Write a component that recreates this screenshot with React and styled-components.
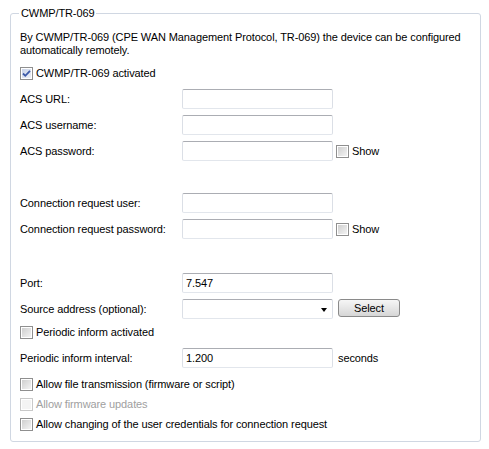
import React from "react";
import styled, { createGlobalStyle } from "styled-components";

const Global = createGlobalStyle`
  html, body { margin: 0; padding: 0; background: #fff; }
  body { font-family: Tahoma, "Liberation Sans", "DejaVu Sans", sans-serif; font-size: 11px; color: #000; letter-spacing: -0.1px; }
`;

const Frame = styled.fieldset`
  margin: 7px 0 0 10px;
  width: 471px;
  box-sizing: border-box;
  border: 1px solid #d0d7e2;
  border-radius: 3px;
  padding: 0 9px 10px 9px;
  min-width: 0;
`;

const Legend = styled.legend`
  padding: 0 2px;
  line-height: 13px;
  font-size: 11px;
  margin-left: -1px;
`;

const Body = styled.div`
  display: flex;
  flex-direction: column;
  padding-top: 11px;
`;

const Desc = styled.p`
  margin: 0;
  line-height: 13px;
`;

const Row = styled.div`
  display: flex;
  align-items: center;
  height: ${(p) => p.$h || 20}px;
  margin-top: ${(p) => p.$mt || 0}px;
`;

const Label = styled.span`
  width: 162px;
  flex: none;
  line-height: 13px;
`;

const TextBox = styled.div`
  position: relative;
  width: 151px;
  height: 20px;
  box-sizing: border-box;
  border: 1px solid #e2e6ec;
  border-top-color: #abadb3;
  border-left-color: #dbdfe6;
  border-right-color: #dbdfe6;
  border-radius: 2px;
  background: #fff;
  display: flex;
  align-items: center;
  padding-left: 3px;
  flex: none;
`;

const Arrow = styled.span`
  position: absolute;
  right: 5px;
  top: 8px;
  width: 0;
  height: 0;
  border-left: 3.5px solid transparent;
  border-right: 3.5px solid transparent;
  border-top: 4px solid #000;
`;

const Box = styled.span`
  width: 13px;
  height: 13px;
  box-sizing: border-box;
  flex: none;
  border: 1px solid ${(p) => (p.$disabled ? "#c9c9c9" : "#8f8f8f")};
  background: #fff;
  padding: 1px;
  display: inline-flex;
  margin-left: ${(p) => p.$ml || 0}px;
  margin-right: 3px;
`;

const BoxInner = styled.span`
  flex: 1;
  background: ${(p) =>
    p.$disabled
      ? "#f4f4f4"
      : p.$checked
      ? "linear-gradient(135deg, #c9d3e8 0%, #eef1f8 100%)"
      : "linear-gradient(135deg, #cfcfcf 0%, #f3f3f3 100%)"};
  display: flex;
  align-items: center;
  justify-content: center;
`;

const CheckText = styled.span`
  color: ${(p) => (p.$disabled ? "#a0a0a0" : "#000")};
  line-height: 13px;
`;

const Button = styled.div`
  margin-left: 5px;
  width: 62px;
  height: 18px;
  box-sizing: border-box;
  border: 1px solid #8a8a8a;
  border-radius: 3px;
  background: linear-gradient(#f6f6f6, #e3e3e3 60%, #d6d6d6);
  display: flex;
  align-items: center;
  justify-content: center;
  align-self: flex-start;
`;

const Suffix = styled.span`
  margin-left: 5px;
`;

function Check({ checked, disabled, ml }) {
  return (
    <Box $disabled={disabled} $ml={ml}>
      <BoxInner $checked={checked} $disabled={disabled}>
        {checked && (
          <svg width="9" height="9" viewBox="0 0 9 9">
            <path d="M1 4.5 L3.3 6.8 L8 1.8" fill="none" stroke="#3d5aa8" strokeWidth="1.8" />
          </svg>
        )}
      </BoxInner>
    </Box>
  );
}

function CheckRow({ label, checked, disabled, mt }) {
  return (
    <Row $h={13} $mt={mt}>
      <Check checked={checked} disabled={disabled} />
      <CheckText $disabled={disabled}>{label}</CheckText>
    </Row>
  );
}

function FieldRow({ label, value, mt, show, children }) {
  return (
    <Row $mt={mt}>
      <Label>{label}</Label>
      <TextBox>{value}</TextBox>
      {show && (
        <>
          <Check ml={3} />
          <CheckText>Show</CheckText>
        </>
      )}
      {children}
    </Row>
  );
}

export default function App() {
  return (
    <>
      <Global />
      <Frame>
        <Legend>CWMP/TR-069</Legend>
        <Body>
          <Desc>
            By CWMP/TR-069 (CPE WAN Management Protocol, TR-069) the device can be configured
            <br />
            automatically remotely.
          </Desc>
          <CheckRow label="CWMP/TR-069 activated" checked mt={10} />
          <FieldRow label="ACS URL:" mt={9} />
          <FieldRow label="ACS username:" mt={6} />
          <FieldRow label="ACS password:" mt={6} show />
          <FieldRow label="Connection request user:" mt={32} />
          <FieldRow label="Connection request password:" mt={6} show />
          <FieldRow label="Port:" mt={34} value="7.547" />
          <Row $mt={6}>
            <Label>Source address (optional):</Label>
            <TextBox>
              <Arrow />
            </TextBox>
            <Button>Select</Button>
          </Row>
          <CheckRow label="Periodic inform activated" mt={7} />
          <FieldRow label="Periodic inform interval:" mt={9} value="1.200">
            <Suffix>seconds</Suffix>
          </FieldRow>
          <CheckRow label="Allow file transmission (firmware or script)" mt={10} />
          <CheckRow label="Allow firmware updates" disabled mt={7} />
          <CheckRow label="Allow changing of the user credentials for connection request" mt={7} />
        </Body>
      </Frame>
    </>
  );
}
